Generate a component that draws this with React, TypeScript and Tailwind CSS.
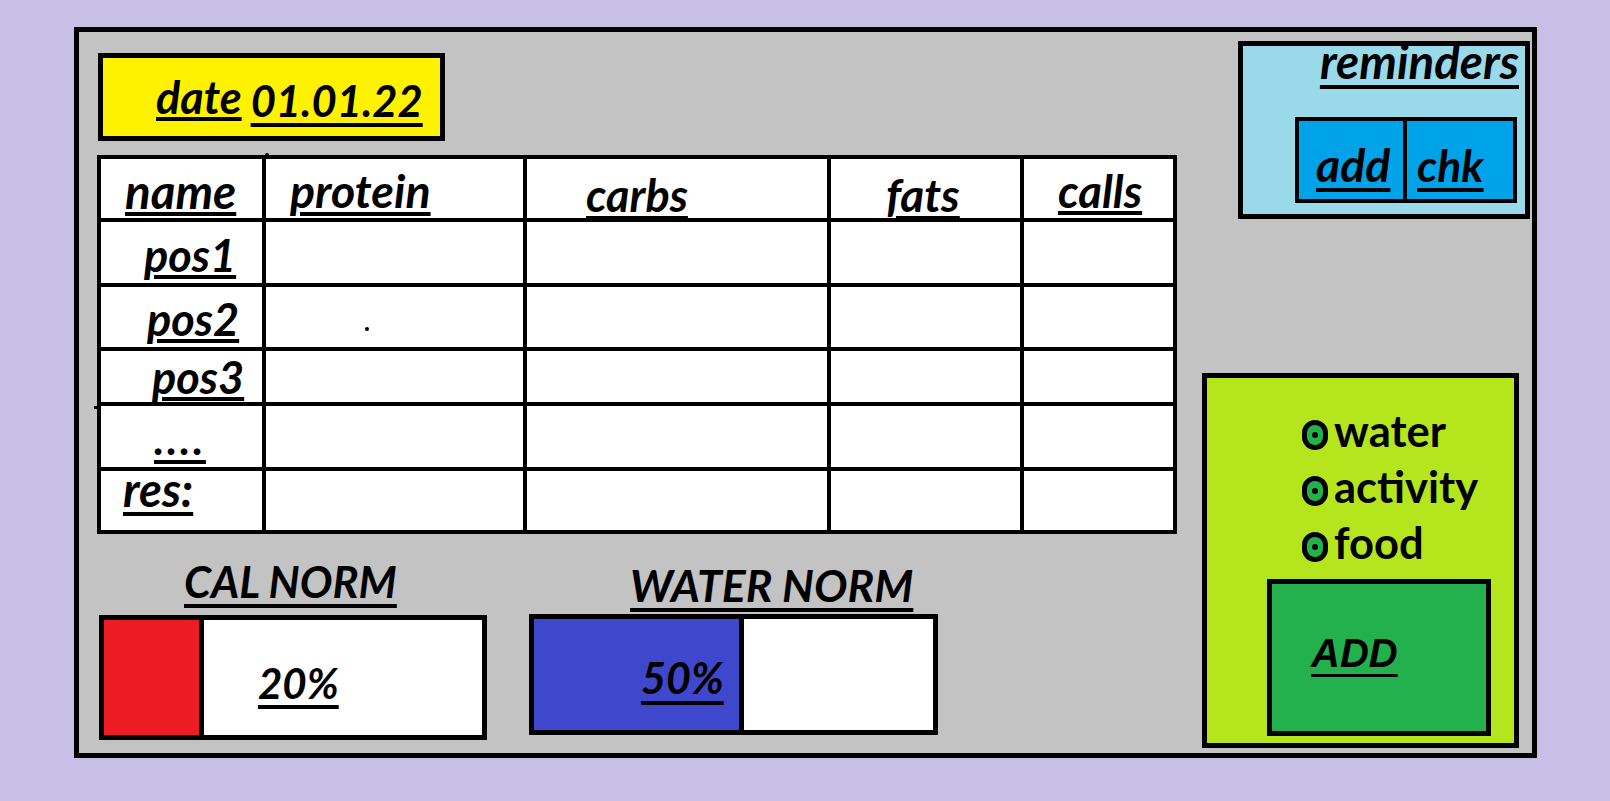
import React from "react";

const t = "font-['Lato',sans-serif] font-bold italic leading-none text-black underline decoration-[4px]";

const colW = [
  "w-[161px]",
  "w-[261px] border-l-4 border-black",
  "w-[304px] border-l-4 border-black",
  "w-[193px] border-l-4 border-black",
  "w-[153px] border-l-4 border-black",
];

const header = [
  { label: "name", cls: "text-[47.5px] pl-[24px] pb-[4px] underline-offset-[3px]" },
  { label: "protein", cls: "text-[46.5px] pl-[24px] pb-[5px] underline-offset-[4px]" },
  { label: "carbs", cls: "text-[45px] pl-[59px] pb-[0px] underline-offset-[4px]" },
  { label: "fats", cls: "text-[46px] pl-[55px] pb-[0px] underline-offset-[4px]" },
  { label: "calls", cls: "text-[45.5px] pl-[34px] pb-[5px] underline-offset-[3px]" },
];

const rows = [
  { label: "pos1", h: "h-[65px]", cls: "text-[45px] pl-[43px] pb-[5px] underline-offset-[3px]" },
  { label: "pos2", h: "h-[64px]", cls: "text-[45px] pl-[46px] pb-[5px] underline-offset-[3px]" },
  { label: "pos3", h: "h-[55px]", cls: "text-[45px] pl-[51px] pb-[2px] underline-offset-[3px]" },
  { label: "....", h: "h-[65px]", cls: "text-[44px] pl-[53px] pb-[7px] underline-offset-[5px] tracking-[2.5px]" },
  { label: "res:", h: "h-[63px]", cls: "text-[47px] pl-[22px] pb-[17px] underline-offset-[5px]" },
];

function Radio({ label }: { label: string }) {
  return (
    <div className="h-[56px] flex items-center pl-[95px] gap-[6px]">
      <span className="w-[26px] h-[30px] rounded-full border-[5px] border-black bg-[#22b14c] flex items-center justify-center">
        <span className="w-[6px] h-[6px] rounded-full bg-black" />
      </span>
      <span className="font-['Lato',sans-serif] font-bold leading-none text-[43.5px] text-black mb-[8px]">{label}</span>
    </div>
  );
}

export default function App() {
  return (
    <div className="w-[1610px] h-[801px] overflow-hidden bg-[#c8bfe7] pt-[27px] pl-[74px]">
      <div className="w-[1463px] h-[731px] border-[5px] border-black bg-[#c3c3c3] flex">
        {/* left side: date, table, norms */}
        <div className="w-[1098px] pl-[18px] flex flex-col">
          <div className="ml-[1px] mt-[21px] w-[347px] h-[88px] border-[5px] border-black bg-[#fff200] flex items-end pl-[53px] pb-[14px]">
            <span className={`${t} text-[45px] underline-offset-[3px] mb-[2px]`}>date</span>
            <span className={`${t} text-[43.5px] underline-offset-[6px] ml-[9px]`}>01.01.22</span>
          </div>

          <div className="relative mt-[14px] w-[1080px] border-4 border-black bg-white">
            <span className="absolute -top-[6px] left-[164px] w-[4px] h-[4px] rounded-t-full bg-black" />
            <span className="absolute top-[247px] -left-[7px] w-[3px] h-[3px] bg-black" />
            <div className="h-[59px] flex">
              {header.map((c, i) => (
                <div key={c.label} className={`${colW[i]} flex items-end`}>
                  <span className={`${t} ${c.cls}`}>{c.label}</span>
                </div>
              ))}
            </div>
            {rows.map((r, ri) => (
              <div key={r.label} className={`${r.h} flex border-t-4 border-black`}>
                <div className={`${colW[0]} flex items-end`}>
                  <span className={`${t} ${r.cls}`}>{r.label}</span>
                </div>
                {colW.slice(1).map((w, ci) => (
                  <div key={ci} className={`${w} relative`}>
                    {ri === 1 && ci === 0 && (
                      <span className="absolute left-[99px] top-[40px] w-[4px] h-[4px] rounded-full bg-black" />
                    )}
                  </div>
                ))}
              </div>
            ))}
          </div>

          <div className="flex items-start">
            <div className="ml-[2px] mt-[26px] flex flex-col">
              <span className={`${t} text-[43.5px] pl-[85px] underline-offset-[6px]`}>CAL NORM</span>
              <div className="mt-[11px] w-[388px] h-[125px] border-[5px] border-black flex">
                <div className="w-[95px] bg-[#ed1c24]" />
                <div className="flex-1 border-l-[5px] border-black bg-white pt-[42px] pl-[54px]">
                  <span className={`${t} text-[42px] underline-offset-[6px]`}>20%</span>
                </div>
              </div>
            </div>
            <div className="ml-[42px] mt-[29px] flex flex-col">
              <span className={`${t} text-[44.5px] pl-[101px] underline-offset-[6px]`}>WATER NORM</span>
              <div className="mt-[6px] w-[409px] h-[121px] border-[5px] border-black flex">
                <div className="w-[205px] bg-[#3f48cc] pt-[37px] pl-[107px]">
                  <span className={`${t} text-[43px] underline-offset-[7px]`}>50%</span>
                </div>
                <div className="flex-1 border-l-[5px] border-black bg-white" />
              </div>
            </div>
          </div>
        </div>

        {/* right side: reminders and quick add */}
        <div className="flex-1 flex flex-col">
          <div className="ml-[61px] mt-[9px] w-[292px] h-[178px] border-[5px] border-black bg-[#99d9ea] flex flex-col items-end pr-[6px]">
            <span className={`${t} text-[47.5px] -mt-[9px] underline-offset-[6px]`}>reminders</span>
            <div className="mt-[32px] mr-[2px] w-[222px] h-[86px] border-4 border-black flex">
              <div className="w-[104px] bg-[#00a2e8] flex items-end pl-[17px] pb-[11px]">
                <span className={`${t} text-[46.5px] underline-offset-[6px]`}>add</span>
              </div>
              <div className="flex-1 border-l-4 border-black bg-[#00a2e8] flex items-end pl-[10px] pb-[11px]">
                <span className={`${t} text-[44.5px] underline-offset-[6px]`}>chk</span>
              </div>
            </div>
          </div>

          <div className="ml-[25px] mt-[154px] w-[317px] h-[375px] border-[5px] border-black bg-[#b5e61d] flex flex-col pt-[29px]">
            <Radio label="water" />
            <Radio label="activity" />
            <Radio label="food" />
            <div className="ml-[60px] mt-[4px] w-[224px] h-[157px] border-[5px] border-black bg-[#22b14c] pt-[49px] pl-[39px]">
              <span className="font-['Liberation_Sans',sans-serif] font-bold italic leading-none text-[40px] text-black underline decoration-[3px] underline-offset-[7px]">
                ADD
              </span>
            </div>
          </div>
        </div>
      </div>
    </div>
  );
}
